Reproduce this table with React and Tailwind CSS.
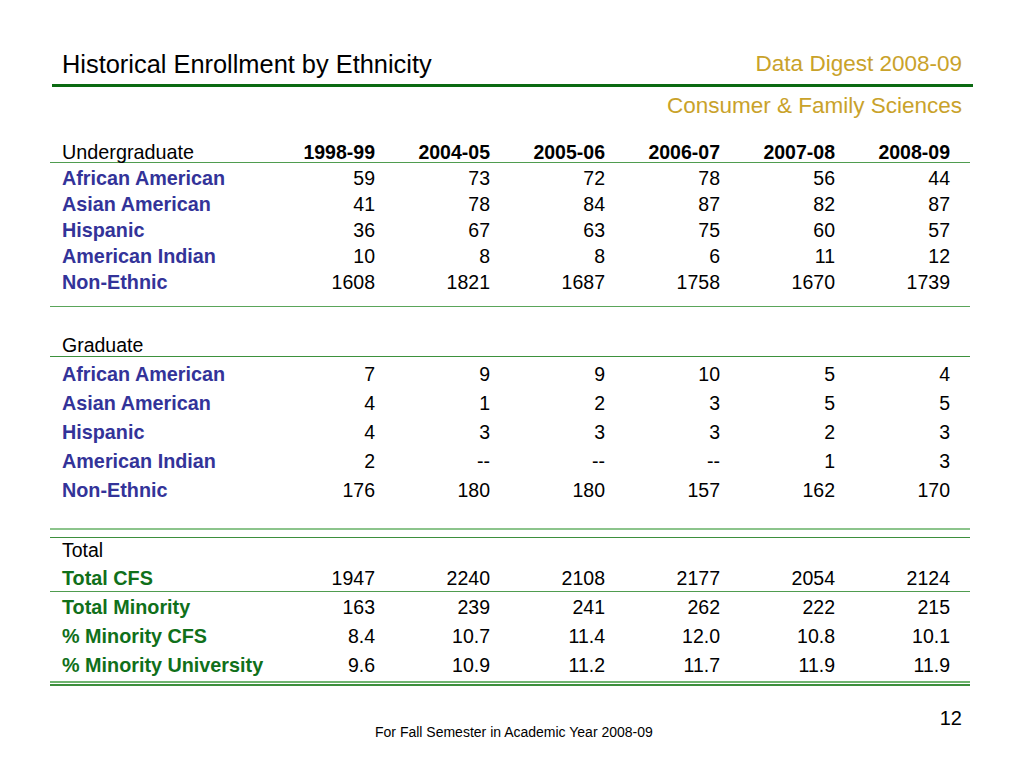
const years = ['1998-99', '2004-05', '2005-06', '2006-07', '2007-08', '2008-09'];

const undergrad = [
  ['African American', [59, 73, 72, 78, 56, 44]],
  ['Asian American', [41, 78, 84, 87, 82, 87]],
  ['Hispanic', [36, 67, 63, 75, 60, 57]],
  ['American Indian', [10, 8, 8, 6, 11, 12]],
  ['Non-Ethnic', [1608, 1821, 1687, 1758, 1670, 1739]],
];

const graduate = [
  ['African American', [7, 9, 9, 10, 5, 4]],
  ['Asian American', [4, 1, 2, 3, 5, 5]],
  ['Hispanic', [4, 3, 3, 3, 2, 3]],
  ['American Indian', [2, '--', '--', '--', 1, 3]],
  ['Non-Ethnic', [176, 180, 180, 157, 162, 170]],
];

const totals = [
  ['Total Minority', ['163', '239', '241', '262', '222', '215']],
  ['% Minority CFS', ['8.4', '10.7', '11.4', '12.0', '10.8', '10.1']],
  ['% Minority University', ['9.6', '10.9', '11.2', '11.7', '11.9', '11.9']],
];

const grid = 'grid grid-cols-[230px_repeat(6,115px)] items-center';

function DataRow({ label, values, labelClass, className = '' }) {
  return (
    <div className={`${grid} ${className}`}>
      <div className={`pl-[12px] font-bold text-[19.8px] whitespace-nowrap ${labelClass}`}>{label}</div>
      {values.map((v, i) => (
        <div key={i} className="text-right pr-[20px] text-black">
          {v}
        </div>
      ))}
    </div>
  );
}

export default function App() {
  return (
    <div className="w-[1024px] h-[768px] bg-white text-black font-['Liberation_Sans',Arial,sans-serif] overflow-hidden">
      {/* title */}
      <div className="flex items-center justify-between pt-[49px] pl-[62px] pr-[62px] h-[79px]">
        <h1 className="text-[25.4px] leading-[30px]">Historical Enrollment by Ethnicity</h1>
        <div className="text-[22.5px] leading-[30px] text-[#c9a22a]">Data Digest 2008-09</div>
      </div>
      <div className="ml-[52px] mt-[5px] w-[921px] h-[3px] bg-[#0b6a12]" />
      <div className="mt-[5px] pr-[62px] text-right text-[22.5px] leading-[28px] text-[#c9a22a]">
        Consumer &amp; Family Sciences
      </div>

      {/* table */}
      <div className="ml-[50px] mt-[20px] w-[920px] text-[19.5px] leading-[24px]">
        <div className={`${grid} h-[23px] border-b border-[#4f9c4f]`}>
          <div className="pl-[12px] text-[19.8px]">Undergraduate</div>
          {years.map((y) => (
            <div key={y} className="text-right pr-[20px] font-bold">
              {y}
            </div>
          ))}
        </div>
        <div className="pt-[2px]">
          {undergrad.map(([label, vals]) => (
            <DataRow key={label} label={label} values={vals} labelClass="text-[#333399]" className="h-[26px]" />
          ))}
        </div>
        <div className="h-[12px] border-b border-[#5aa55a]" />

        <div className="h-[26px]" />
        <div className="h-[24px] flex items-center pl-[12px] border-b border-[#3d913d]">Graduate</div>
        <div className="pt-[2px]">
          {graduate.map(([label, vals]) => (
            <DataRow key={label} label={label} values={vals} labelClass="text-[#333399]" className="h-[29px]" />
          ))}
        </div>
        <div className="h-[24px]" />
        <div className="h-[2px] bg-[#8cc48c]" />
        <div className="h-[8px] border-b border-[#3d8f3d]" />

        <div className="h-[23px] flex items-center pl-[12px]">Total</div>
        <DataRow
          label="Total CFS"
          values={['1947', '2240', '2108', '2177', '2054', '2124']}
          labelClass="text-[#10701a]"
          className="h-[31px] pt-[3px] border-b border-[#4f9c4f]"
        />
        {totals.map(([label, vals]) => (
          <DataRow key={label} label={label} values={vals} labelClass="text-[#10701a]" className="h-[29px]" />
        ))}
        <div className="h-[2px]" />
        <div className="h-[2px] bg-[#6fb46f]" />
        <div className="h-[1px]" />
        <div className="h-[2px] bg-[#3d8f3d]" />
      </div>

      {/* footer */}
      <div className="flex items-start mt-[20px]">
        <div className="ml-[375px] mt-[17px] text-[14px] leading-[18px]">
          For Fall Semester in Academic Year 2008-09
        </div>
        <div className="ml-auto mr-[62px] text-[20px] leading-[24px]">12</div>
      </div>
    </div>
  );
}
